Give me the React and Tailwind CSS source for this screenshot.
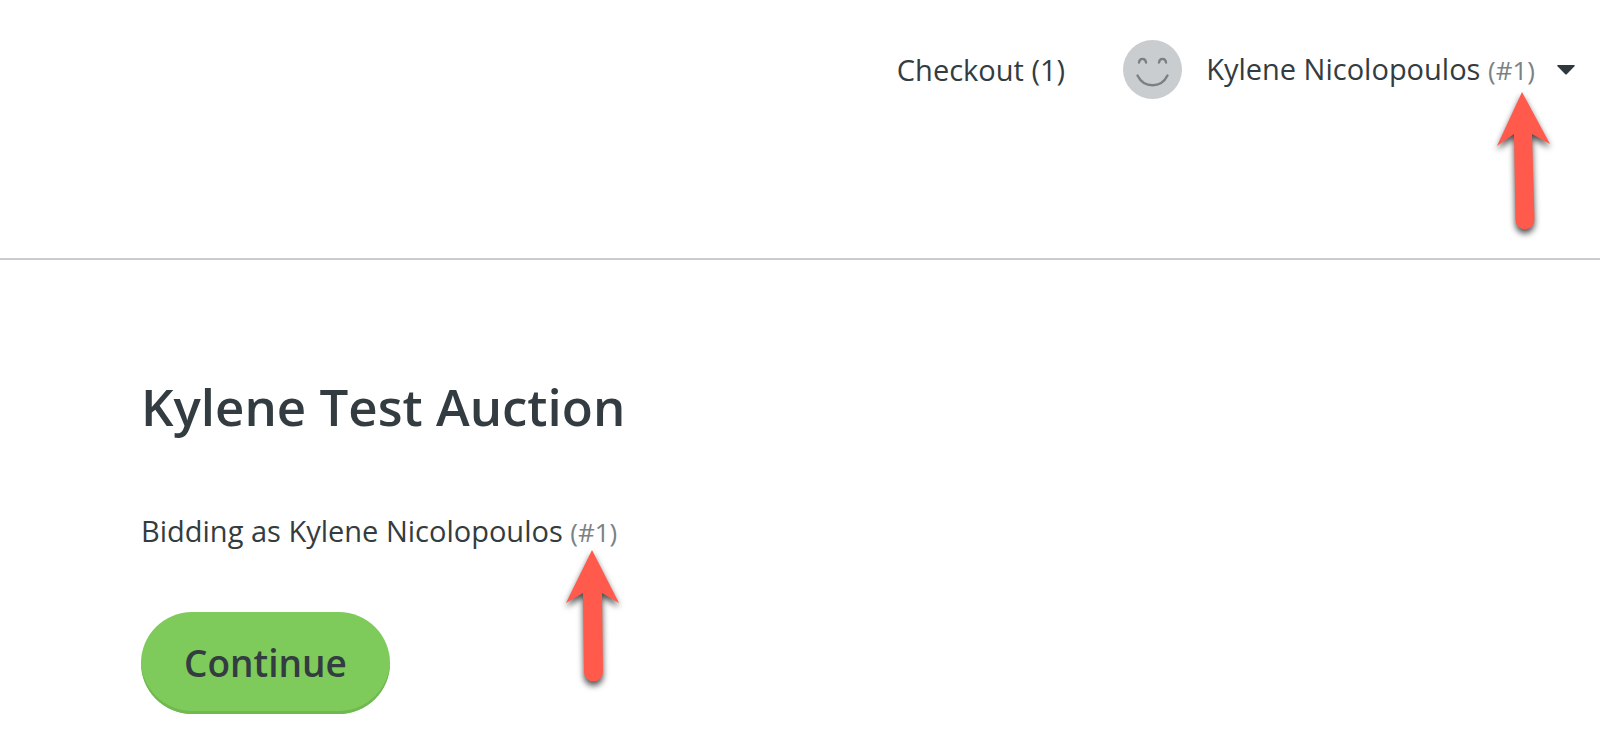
import React from 'react';

const BidderNumber = ({ number, children }) => (
  <span className="relative text-[26px] text-[#7b8285]">
    (#{number})
    {children}
  </span>
);

const Avatar = () => (
  <svg className="h-[59px] w-[59px]" viewBox="0 0 59 59" fill="none" aria-hidden="true">
    <circle cx="29.5" cy="29.5" r="29.5" fill="#c9cdd0" />
    <g stroke="#7b8083" strokeWidth="2.4" strokeLinecap="round">
      <path d="M16 22.500c.4-4.800 6.600-4.800 7 0" />
      <path d="M36 22.500c.4-4.800 6.600-4.800 7 0" />
      <path d="M14.500 35.500c6.500 13 23.500 13 30 0" />
    </g>
  </svg>
);

const HeaderArrow = () => (
  <svg
    className="pointer-events-none absolute left-2 top-10 h-[140px] w-[54px] overflow-visible drop-shadow-[0_4px_3px_rgba(0,0,0,0.7)]"
    viewBox="0 0 54 140"
    aria-hidden="true"
  >
    <path d="M26 0 54 52 36 42 38.500 127.500a9.500 9.500 0 0 1-19 1L18 42 1 54Z" fill="#ff5a4c" />
  </svg>
);

const BiddingArrow = () => (
  <svg
    className="pointer-events-none absolute -left-1 top-9 h-[134px] w-[54px] overflow-visible drop-shadow-[0_4px_3px_rgba(0,0,0,0.7)]"
    viewBox="0 0 54 134"
    aria-hidden="true"
  >
    <path d="M26 0 53 53 36 43 37 122a9.500 9.500 0 0 1-19 0L17 43 0 53Z" fill="#ff5a4c" />
  </svg>
);

const Header = ({ name, number, cartCount }) => (
  <header className="flex justify-end border-b-2 border-[#cacbcf] pb-[159px] pl-6 pr-[25px] pt-10">
    <nav className="flex items-center">
      <a href="#checkout" className="mr-[58px]">
        Checkout ({cartCount})
      </a>
      <button type="button" className="flex items-center">
        <Avatar />
        <span className="ml-6 mr-[22px] whitespace-nowrap">
          {name} <BidderNumber number={number}><HeaderArrow /></BidderNumber>
        </span>
        <svg className="h-[10px] w-[18px]" viewBox="0 0 18 10" aria-hidden="true">
          <path d="M1 0h16q1.500 0 .5 1.200L10 9q-1 1-2 0L.5 1.200Q-.5 0 1 0Z" fill="#2f383c" />
        </svg>
      </button>
    </nav>
  </header>
);

const App = () => {
  const bidder = { name: 'Kylene Nicolopoulos', number: 1 };

  return (
    <div className="bg-white font-['Open_Sans',sans-serif] text-[29px] leading-10 text-[#333c40]">
      <Header name={bidder.name} number={bidder.number} cartCount={1} />
      <main className="px-[141px] pb-9 pt-[110px]">
        <h1 className="text-[51px] font-semibold leading-[72px]">Kylene Test Auction</h1>
        <p className="mt-[69px]">
          Bidding as {bidder.name} <BidderNumber number={bidder.number}><BiddingArrow /></BidderNumber>
        </p>
        <button
          type="button"
          className="mt-[60px] h-[102px] rounded-full bg-[#7eca5b] px-[43px] text-[37px] font-semibold shadow-[inset_0_-3px_0_#70b850]"
        >
          Continue
        </button>
      </main>
    </div>
  );
};

export default App;
